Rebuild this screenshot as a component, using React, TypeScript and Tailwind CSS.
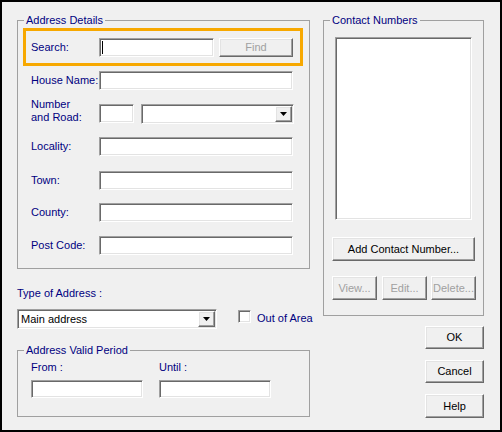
import React from 'react';

const sunken =
  'bg-white border border-t-[#a0a0a0] border-l-[#a0a0a0] border-b-white border-r-white shadow-[inset_1px_1px_0_#696969,inset_-1px_-1px_0_#e3e3e3]';
const raised =
  'bg-[#f0f0f0] border border-t-white border-l-white border-b-[#696969] border-r-[#696969] shadow-[inset_-1px_-1px_0_#a0a0a0,inset_1px_1px_0_#e3e3e3]';

function Arrow() {
  return (
    <svg width="7" height="4" viewBox="0 0 7 4">
      <path d="M0 0h7L3.5 4z" fill="#000" />
    </svg>
  );
}

function Combo({ width, text }: { width: string; text?: string }) {
  return (
    <div className={`${sunken} ${width} h-[20px] shrink-0 flex items-stretch p-[1px]`}>
      <div className="flex-1 flex items-center pl-[2px] text-black">{text}</div>
      <div className={`${raised} w-[17px] flex items-center justify-center`}>
        <Arrow />
      </div>
    </div>
  );
}

function Button({
  label,
  className,
  disabled,
}: {
  label: string;
  className: string;
  disabled?: boolean;
}) {
  return (
    <div
      className={`${raised} ${className} shrink-0 whitespace-nowrap flex items-center justify-center ${
        disabled ? 'text-[#a0a0a0]' : 'text-black'
      }`}
    >
      {label}
    </div>
  );
}

function Group({
  title,
  className,
  children,
}: {
  title: string;
  className: string;
  children: React.ReactNode;
}) {
  return (
    <fieldset className={`border border-[#a0a0a0] ${className}`}>
      <legend className="ml-[6px] px-[2px] text-[#000080]">{title}</legend>
      {children}
    </fieldset>
  );
}

function Row({ label, className, children }: { label: string; className: string; children: React.ReactNode }) {
  return (
    <div className={`flex items-center h-[19px] ${className}`}>
      <span className="w-[68px] shrink-0 whitespace-nowrap text-[#000080]">{label}</span>
      {children}
    </div>
  );
}

export default function App() {
  return (
    <div className="w-[502px] h-[432px] border-2 border-black bg-[#f0f0f0] font-['Liberation_Sans',Arial,sans-serif] text-[11px] leading-[13px] flex">
      {/* Left column */}
      <div className="ml-[15px] pt-[12px] w-[293px] shrink-0 flex flex-col">
        <Group title="Address Details" className="h-[255px]">
          {/* Search highlight */}
          <div className="ml-[5px] mt-[1px] w-[280px] h-[38px] border-[3px] border-[#f7a800] flex items-center pl-[5px]">
            <span className="w-[68px] text-[#000080]">Search:</span>
            <div className={`${sunken} w-[115px] h-[19px] flex items-center pl-[2px]`}>
              <span className="w-px h-[13px] bg-black" />
            </div>
            <Button label="Find" disabled className="ml-[5px] w-[74px] h-[19px]" />
          </div>

          <div className="pl-[13px] flex flex-col">
            <Row label="House Name:" className="mt-[5px]">
              <div className={`${sunken} w-[194px] h-[19px]`} />
            </Row>
            <div className="flex items-center h-[19px] mt-[14px]">
              <span className="w-[68px] text-[#000080] mb-[6px]">
                Number
                <br />
                and Road:
              </span>
              <div className={`${sunken} w-[35px] h-[19px]`} />
              <div className="ml-[7px]">
                <Combo width="w-[153px]" />
              </div>
            </div>
            <Row label="Locality:" className="mt-[14px]">
              <div className={`${sunken} w-[194px] h-[19px]`} />
            </Row>
            <Row label="Town:" className="mt-[15px]">
              <div className={`${sunken} w-[194px] h-[19px]`} />
            </Row>
            <Row label="County:" className="mt-[13px]">
              <div className={`${sunken} w-[194px] h-[19px]`} />
            </Row>
            <Row label="Post Code:" className="mt-[14px]">
              <div className={`${sunken} w-[194px] h-[19px]`} />
            </Row>
          </div>
        </Group>

        <span className="mt-[18px] text-[#000080]">Type of Address :</span>
        <div className="mt-[9px] flex items-start whitespace-nowrap">
          <Combo width="w-[200px]" text="Main address" />
          <div className="ml-[21px] mt-[1px] flex items-start">
            <div className={`${sunken} w-[13px] h-[13px] shrink-0`} />
            <span className="ml-[6px] mt-[2px] text-[#000080]">Out of Area</span>
          </div>
        </div>

        <Group title="Address Valid Period" className="mt-[15px] h-[73px]">
          <div className="pl-[13px] mt-[4px] flex">
            <span className="w-[128px] text-[#000080]">From :</span>
            <span className="text-[#000080]">Until :</span>
          </div>
          <div className="pl-[13px] mt-[6px] flex gap-[16px]">
            <div className={`${sunken} w-[112px] h-[18px]`} />
            <div className={`${sunken} w-[112px] h-[18px]`} />
          </div>
        </Group>
      </div>

      {/* Right column */}
      <div className="ml-[13px] pt-[12px] w-[161px] shrink-0 flex flex-col">
        <Group title="Contact Numbers" className="h-[302px]">
          <div className={`${sunken} ml-[11px] mt-[10px] w-[137px] h-[183px]`} />
          <Button label="Add Contact Number..." className="ml-[8px] mt-[17px] w-[143px] h-[24px]" />
          <div className="ml-[8px] mt-[15px] flex">
            <Button label="View..." disabled className="w-[45px] h-[24px]" />
            <Button label="Edit..." disabled className="ml-[5px] w-[45px] h-[24px]" />
            <Button label="Delete..." disabled className="ml-[4px] w-[45px] h-[24px]" />
          </div>
        </Group>
        <div className="flex flex-col items-end">
          <Button label="OK" className="mt-[10px] w-[59px] h-[23px]" />
          <Button label="Cancel" className="mt-[11px] w-[59px] h-[23px]" />
          <Button label="Help" className="mt-[11px] w-[59px] h-[24px]" />
        </div>
      </div>
    </div>
  );
}
